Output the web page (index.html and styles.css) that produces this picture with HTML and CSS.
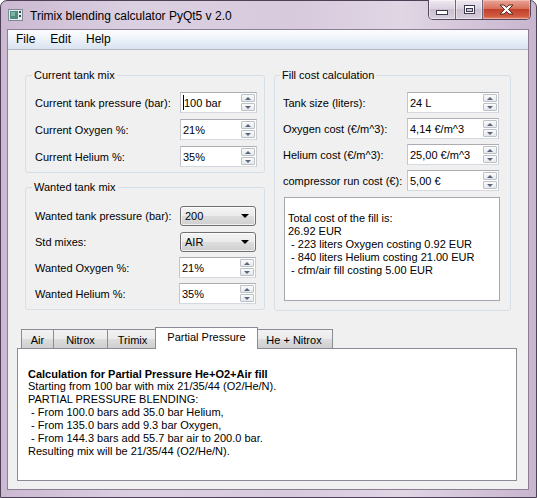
FILE: index.html
```html
<!DOCTYPE html>
<html>
<head>
<meta charset="utf-8">
<title>Trimix blending calculator PyQt5 v 2.0</title>
<link rel="stylesheet" href="styles.css">
</head>
<body>
<div class="window">
  <div class="titlebar">
    <svg class="app-icon" width="15" height="12" viewBox="0 0 15 12">
      <rect x="0.5" y="0.5" width="14" height="11" fill="#e9ecee" stroke="#7d8a92"/>
      <rect x="2" y="2" width="8" height="8" fill="#4f8a80"/>
      <rect x="3" y="3" width="4" height="4" fill="#7fb3a6"/>
      <rect x="11" y="2" width="2" height="2" fill="#3b4650"/>
      <rect x="11" y="6" width="2" height="2" fill="#3b4650"/>
    </svg>
    <span class="title">Trimix blending calculator PyQt5 v 2.0</span>
    <div class="caption">
      <div class="cbtn cmin">
        <svg width="12" height="5" viewBox="0 0 12 5"><rect x="0.5" y="0.5" width="11" height="4" fill="#fff" stroke="#3c3a4c"/></svg>
      </div>
      <div class="cbtn cmax">
        <svg width="11" height="9" viewBox="0 0 11 9"><rect x="0.5" y="0.5" width="10" height="8" fill="#fff" stroke="#3c3a4c"/><rect x="2.5" y="3.5" width="6" height="3" fill="#cfc6d6" stroke="#3c3a4c"/></svg>
      </div>
      <div class="cbtn cclose">
        <svg width="15" height="11" viewBox="0 0 15 11"><path d="M1 1 L5 1 L7.5 3.5 L10 1 L14 1 L9.5 5.5 L14 10 L10 10 L7.5 7.5 L5 10 L1 10 L5.5 5.5 Z" fill="#fff" stroke="#5a2a25" stroke-width="1" stroke-linejoin="round"/></svg>
      </div>
    </div>
  </div>
  <div class="client">
    <div class="menubar">
      <span class="menu">File</span>
      <span class="menu">Edit</span>
      <span class="menu">Help</span>
    </div>
    <div class="content">
      <div class="top">
        <div class="left-col">
          <fieldset class="group g-current">
            <legend>Current tank mix</legend>
            <div class="row">
              <span class="lbl">Current tank pressure (bar):</span>
              <div class="spin s-left"><span class="caret"></span><span class="val">100 bar</span><span class="arrows"><span class="ab up"></span><span class="ab down"></span></span></div>
            </div>
            <div class="row">
              <span class="lbl">Current Oxygen %:</span>
              <div class="spin s-left"><span class="val">21%</span><span class="arrows"><span class="ab up"></span><span class="ab down"></span></span></div>
            </div>
            <div class="row">
              <span class="lbl">Current Helium %:</span>
              <div class="spin s-left"><span class="val">35%</span><span class="arrows"><span class="ab up"></span><span class="ab down"></span></span></div>
            </div>
          </fieldset>
          <fieldset class="group g-wanted">
            <legend>Wanted tank mix</legend>
            <div class="row">
              <span class="lbl">Wanted tank pressure (bar):</span>
              <div class="combo"><span class="val">200</span><span class="tri"></span></div>
            </div>
            <div class="row">
              <span class="lbl">Std mixes:</span>
              <div class="combo"><span class="val">AIR</span><span class="tri"></span></div>
            </div>
            <div class="row">
              <span class="lbl">Wanted Oxygen %:</span>
              <div class="spin s-left"><span class="val">21%</span><span class="arrows"><span class="ab up"></span><span class="ab down"></span></span></div>
            </div>
            <div class="row">
              <span class="lbl">Wanted Helium %:</span>
              <div class="spin s-left"><span class="val">35%</span><span class="arrows"><span class="ab up"></span><span class="ab down"></span></span></div>
            </div>
          </fieldset>
        </div>
        <fieldset class="group g-cost">
          <legend>Fill cost calculation</legend>
          <div class="row">
            <span class="lbl">Tank size (liters):</span>
            <div class="spin s-right"><span class="val">24 L</span><span class="arrows"><span class="ab up"></span><span class="ab down"></span></span></div>
          </div>
          <div class="row">
            <span class="lbl">Oxygen cost (€/m^3):</span>
            <div class="spin s-right"><span class="val">4,14 €/m^3</span><span class="arrows"><span class="ab up"></span><span class="ab down"></span></span></div>
          </div>
          <div class="row">
            <span class="lbl">Helium cost (€/m^3):</span>
            <div class="spin s-right"><span class="val">25,00 €/m^3</span><span class="arrows"><span class="ab up"></span><span class="ab down"></span></span></div>
          </div>
          <div class="row">
            <span class="lbl">compressor run cost (€):</span>
            <div class="spin s-right"><span class="val">5,00 €</span><span class="arrows"><span class="ab up"></span><span class="ab down"></span></span></div>
          </div>
          <div class="textbox">Total cost of the fill is:
26.92 EUR
 - 223 liters Oxygen costing 0.92 EUR
 - 840 liters Helium costing 21.00 EUR
 - cfm/air fill costing 5.00 EUR</div>
        </fieldset>
      </div>
      <div class="tabwidget">
        <div class="tabbar">
          <span class="tab t-air">Air</span>
          <span class="tab t-nitrox">Nitrox</span>
          <span class="tab t-trimix">Trimix</span>
          <span class="tab t-pp selected">Partial Pressure</span>
          <span class="tab t-henx">He + Nitrox</span>
        </div>
        <div class="pane">
          <div class="heading">Calculation for Partial Pressure He+O2+Air fill</div>
          <div class="body-text">Starting from 100 bar with mix 21/35/44 (O2/He/N).
PARTIAL PRESSURE BLENDING:
 - From 100.0 bars add 35.0 bar Helium,
 - From 135.0 bars add 9.3 bar Oxygen,
 - From 144.3 bars add 55.7 bar air to 200.0 bar.
Resulting mix will be 21/35/44 (O2/He/N).</div>
        </div>
      </div>
    </div>
  </div>
</div>
</body>
</html>
```

FILE: styles.css
```css
* { box-sizing: border-box; }
html, body { margin: 0; padding: 0; }
body {
  width: 537px;
  height: 498px;
  overflow: hidden;
  background: #ffffff;
  font-family: "Liberation Sans", Arial, sans-serif;
  font-size: 11px;
  color: #000;
}

.window {
  width: 537px;
  height: 498px;
  display: flex;
  flex-direction: column;
  border: 1px solid #4e4157;
  border-radius: 7px 7px 0 0;
  background: linear-gradient(90deg, #cbb9d1 0%, #dbd0e2 25%, #d7cadd 55%, #e0d6e4 75%, #c8b5ce 100%);
  padding: 0 7px 7px 6px;
}

.titlebar {
  height: 28px;
  flex-shrink: 0;
  display: flex;
  align-items: center;
}
.app-icon { margin-left: 1px; margin-right: 7px; flex-shrink: 0; }
.title {
  font-size: 12px;
  color: #000;
  padding-top: 1px;
}

.caption {
  margin-left: auto;
  align-self: flex-start;
  margin-top: -1px;
  margin-right: -2px;
  display: flex;
  height: 20px;
  border: 1px solid #554960;
  border-top: 0;
  border-radius: 0 0 5px 5px;
  overflow: hidden;
}
.cbtn {
  display: flex;
  align-items: center;
  justify-content: center;
  height: 100%;
}
.cmin, .cmax {
  width: 27px;
  background: linear-gradient(#efe9f1 0%, #dcd2e0 45%, #cbbfd0 50%, #d8cedd 100%);
  border-right: 1px solid #6f6379;
  box-shadow: inset 0 0 0 1px rgba(255,255,255,0.45);
}
.cmin svg { margin-top: 5px; }
.cclose {
  width: 47px;
  background: linear-gradient(#eaa596 0%, #d8705c 45%, #c2412b 50%, #cf5a40 85%, #e58a6c 100%);
  box-shadow: inset 0 0 0 1px rgba(255,220,210,0.45);
}

.client {
  flex: 1;
  display: flex;
  flex-direction: column;
  border: 1px solid #8c7f95;
  background: #f0f0f0;
  min-height: 0;
}

.menubar {
  height: 20px;
  flex-shrink: 0;
  display: flex;
  align-items: center;
  padding-left: 1px;
  background: linear-gradient(#fbfcfe 0%, #f1f5fb 40%, #e3ebf5 70%, #d9e3f0 100%);
  border-bottom: 1px solid #b3bac6;
  font-size: 12px;
}
.menu { padding: 0 7px 1px 7px; margin-right: 1px; }

.content {
  flex: 1;
  display: flex;
  flex-direction: column;
  padding: 18px 11px 8px 9px;
  min-height: 0;
}

.top {
  display: flex;
  align-items: flex-start;
  gap: 9px;
  padding-left: 8px;
  padding-right: 6px;
}
.left-col {
  width: 240px;
  display: flex;
  flex-direction: column;
  gap: 7px;
}

.group {
  margin: 0;
  min-width: 0;
  border: 1px solid #d5dfe5;
  border-radius: 3px;
  display: flex;
  flex-direction: column;
}
.group legend {
  padding: 0 2px;
  margin-left: -3px;
  line-height: 14px;
  font-size: 11px;
}
.g-current { padding: 10px 7px 5px 9px; gap: 6px; }
.g-wanted { padding: 11px 8px 5px 9px; gap: 5px; }
.g-cost { width: 237px; padding: 10px 11px 9px 8px; gap: 5px; }

.row {
  display: flex;
  align-items: center;
  height: 21px;
}
.lbl { flex: 1; white-space: nowrap; }

.spin {
  display: flex;
  align-items: center;
  height: 21px;
  background: #fff;
  border: 1px solid;
  border-color: #abadb3 #c9ccd2 #d5d9df #c3c6cc;
  padding-left: 2px;
}
.s-left { width: 77px; }
.s-right { width: 92px; }
.spin .val { flex: 1; white-space: nowrap; }
.caret {
  width: 1px;
  height: 15px;
  background: #000;
  margin-right: 0;
}
.arrows {
  display: flex;
  flex-direction: column;
  gap: 1px;
  margin-right: 1px;
}
.ab {
  width: 14px;
  height: 8px;
  border: 1px solid #bcc1c8;
  border-radius: 1px;
  background: linear-gradient(#fbfbfb, #e7e8ea);
  display: flex;
  align-items: center;
  justify-content: center;
}
.ab.up::after {
  content: "";
  border-left: 3px solid transparent;
  border-right: 3px solid transparent;
  border-bottom: 3px solid #56667e;
}
.ab.down::after {
  content: "";
  border-left: 3px solid transparent;
  border-right: 3px solid transparent;
  border-top: 3px solid #56667e;
}

.combo {
  width: 76px;
  height: 20px;
  display: flex;
  align-items: center;
  padding: 0 6px 0 4px;
  border: 1px solid #707070;
  border-radius: 3px;
  background: linear-gradient(#f3f3f3 0%, #ebebeb 50%, #dddddd 51%, #cfcfcf 100%);
  box-shadow: inset 0 0 0 1px rgba(255,255,255,0.7);
}
.combo .val { flex: 1; }
.combo .tri {
  width: 0;
  height: 0;
  border-left: 4px solid transparent;
  border-right: 4px solid transparent;
  border-top: 4px solid #000;
}

.textbox {
  margin-top: 1px;
  margin-left: 1px;
  margin-right: -1px;
  height: 104px;
  background: #fff;
  border: 1px solid #a3a8b0;
  padding: 14px 3px 0 3px;
  line-height: 13px;
  white-space: pre;
}

.tabwidget {
  flex: 1;
  display: flex;
  flex-direction: column;
  margin-top: 16px;
  min-height: 0;
}
.tabbar {
  display: flex;
  align-items: flex-end;
  height: 21px;
  padding-left: 4px;
  position: relative;
  z-index: 1;
}
.tab {
  height: 19px;
  display: flex;
  align-items: center;
  justify-content: center;
  border: 1px solid #898c95;
  border-bottom: 0;
  margin-left: -1px;
  background: linear-gradient(#f2f2f2 0%, #ebebeb 50%, #dddddd 51%, #cfcfcf 100%);
  padding-top: 1px;
}
.tab:first-child { margin-left: 0; }
.t-air { width: 33px; }
.t-nitrox { width: 55px; }
.t-trimix { width: 51px; }
.t-pp { width: 103px; }
.t-henx { width: 78px; }
.tab.selected {
  height: 22px;
  margin: 0 -2px -1px -3px;
  background: #fff;
  position: relative;
  z-index: 2;
  padding-top: 0;
  padding-bottom: 3px;
}

.pane {
  flex: 1;
  background: #fff;
  border: 1px solid #898c95;
  padding: 18px 10px 0 10px;
}
.heading {
  font-weight: bold;
  font-size: 11px;
  line-height: 14px;
}
.body-text {
  white-space: pre;
  line-height: 13px;
  margin-top: -1px;
}
```
